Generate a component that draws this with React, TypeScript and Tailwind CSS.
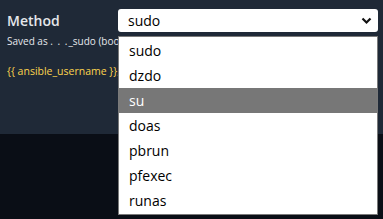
import React, { useState } from 'react';

const methods = ['sudo', 'dzdo', 'su', 'doas', 'pbrun', 'pfexec', 'runas'];

export default function App() {
  const [hovered] = useState('su');
  const [value] = useState('sudo');

  return (
    <div className="relative h-[219px] w-[383px] overflow-hidden bg-[#0a0e16] font-['Open_Sans',sans-serif]">
      {/* Settings panel */}
      <div className="h-[134px] bg-[#1f2937] pl-[7px] pr-[5px] pt-[9px]">
        <div className="flex items-start">
          <div className="w-[111px] pt-[2px] text-[14px] font-semibold leading-[20px] text-[#e5e7eb]">Method</div>
          <div className="flex h-[23px] flex-1 items-center justify-between rounded-[3px] bg-white pl-[10px] pr-[6px] text-[14px] text-black">
            <span>{value}</span>
            <svg width="11" height="8" viewBox="0 0 11 8" fill="none">
              <path d="M1.5 1.5 5.5 5.5 9.5 1.5" stroke="#111" strokeWidth="2.2" />
            </svg>
          </div>
        </div>
        <div className="w-[111px] overflow-hidden">
          <div className="mt-[2px] whitespace-nowrap text-[10px] leading-[14px] text-[#e5e7eb]">
            Saved as <span className="tracking-[1px]">. . .</span>_sudo (boolean)
          </div>
          <div className="mt-[16px] whitespace-nowrap text-[10.5px] leading-[14px] text-[#fcd34d]">
            {'{{ ansible_username }}'}, {'{{ ansible_password }}'}
          </div>
        </div>
      </div>

      {/* Open dropdown list */}
      <div className="absolute left-[118px] top-[36px] w-[260px] border border-[#7a7a7a] bg-white py-[1px]">
        {methods.map((m) => (
          <div
            key={m}
            className={`flex h-[25px] items-center pl-[10px] text-[14px] ${
              m === hovered ? 'bg-[#777777] text-white' : 'text-black'
            }`}
          >
            {m}
          </div>
        ))}
      </div>
    </div>
  );
}
